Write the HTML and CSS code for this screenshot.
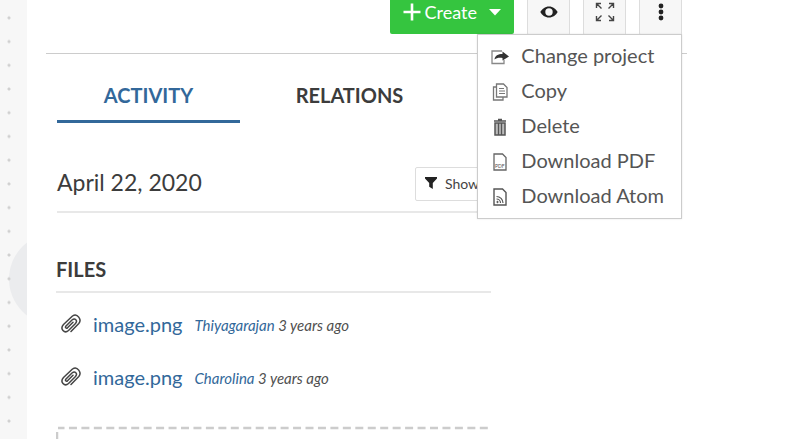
FILE: index.html
```
<!DOCTYPE html>
<html lang="en">
<head>
<meta charset="UTF-8">
<meta name="viewport" content="width=device-width, initial-scale=1.0">
<title>Work package</title>
<link rel="stylesheet" href="styles.css">
</head>
<body>
  <div class="page">
    <!-- Dotted strip on the left -->
    <aside class="rail">
      <div class="rail-circle"></div>
      <div class="rail-dots"></div>
    </aside>

    <main class="content">
      <!-- Toolbar -->
      <div class="toolbar">
        <button class="create-button" type="button">
          <svg width="20" height="20" viewBox="0 0 20 20"><path d="M10 1.500v17M1.500 10h17" stroke="#fff" stroke-width="2.600"/></svg>
          <span>Create</span>
          <svg class="caret" width="14" height="8" viewBox="0 0 14 8"><path d="M1 1h12L7 7.500z" fill="#fff"/></svg>
        </button>
        <button class="tool-button" type="button" aria-label="Watch">
          <svg width="18" height="12" viewBox="0 0 18 12"><path fill-rule="evenodd" d="M9 0.500C5 0.500 2 3 0.300 6 2 9 5 11.500 9 11.500S16 9 17.700 6C16 3 13 0.500 9 0.500zM9 2.300a3.700 3.700 0 1 1 0 7.400 3.700 3.700 0 0 1 0-7.400z" fill="#222"/></svg>
        </button>
        <button class="tool-button" type="button" aria-label="Full screen">
          <svg width="20" height="20" viewBox="0 0 20 20" fill="none" stroke="#444" stroke-width="1.400"><path d="M1.500 6V1.500H6M1.500 1.500l5 5M14 1.500h4.500V6M18.500 1.500l-5 5M1.500 14v4.500H6M1.500 18.500l5-5M18.500 14v4.500H14M18.500 18.500l-5-5"/></svg>
        </button>
        <div class="more">
          <button class="tool-button" type="button" aria-label="More" aria-expanded="true">
            <svg width="6" height="18" viewBox="0 0 6 18" fill="#222"><circle cx="3" cy="3" r="2.400"/><circle cx="3" cy="9" r="2.400"/><circle cx="3" cy="15" r="2.400"/></svg>
          </button>
          <ul class="menu">
            <li><button class="menu-item" type="button">
              <svg width="18" height="18" viewBox="0 0 18 18" fill="none"><path d="M11 3H1v12.500h12V12" stroke="#888" stroke-width="1.300"/><path d="M3.500 11.500C4 7.500 7 6 11.500 6V3.500L18 8.500l-6.500 4V10C8 9.500 5.500 10 3.500 11.500z" fill="#333"/></svg>
              <span>Change project</span>
            </button></li>
            <li><button class="menu-item" type="button">
              <svg width="18" height="18" viewBox="0 0 18 18" fill="none" stroke="#777" stroke-width="1.300"><path d="M5.500 1h7l3.500 3.500V14H5.500zM5.500 4H2.500v13H12v-3"/><path d="M8 5.500h5M8 8h6M8 10.500h6" stroke-width="1"/></svg>
              <span>Copy</span>
            </button></li>
            <li><button class="menu-item" type="button">
              <svg width="18" height="18" viewBox="0 0 18 18" fill="none" stroke="#555"><path d="M3 3h12M7 1.500h4" stroke-width="1.500"/><path d="M4 5h10v12H4z" fill="#bbb" stroke-width="1.500"/><path d="M7.500 5v12M10.500 5v12" stroke-width="1.300"/></svg>
              <span>Delete</span>
            </button></li>
            <li><button class="menu-item" type="button">
              <svg width="18" height="18" viewBox="0 0 18 18"><path d="M3 1h8.500L15 4.500V17H3z" fill="none" stroke="#666" stroke-width="1.300"/><text class="pdf-label" x="4" y="15">PDF</text></svg>
              <span>Download PDF</span>
            </button></li>
            <li><button class="menu-item" type="button">
              <svg width="18" height="18" viewBox="0 0 18 18" fill="none" stroke="#555"><path d="M3 1h8.500L15 4.500V17H3z" stroke-width="1.400"/><path d="M5.500 11a4 4 0 0 1 4 4M5.500 8.500a6.500 6.500 0 0 1 6.500 6.500" stroke-width="1.200"/><circle cx="6.500" cy="14" r="0.700" fill="#444"/></svg>
              <span>Download Atom</span>
            </button></li>
          </ul>
        </div>
      </div>

      <div class="panel">
        <!-- Tabs -->
        <nav class="tabs">
          <a class="tab active" href="#activity">ACTIVITY</a>
          <a class="tab" href="#relations">RELATIONS</a>
        </nav>

        <section class="activity" id="activity">
          <h2 class="date">April 22, 2020</h2>
          <button class="filter-button" type="button">
            <svg width="12" height="12" viewBox="0 0 12 12"><path d="M0 0h12v1.500L7.800 6v6L4.200 9.800V6L0 1.500z" fill="#222"/></svg>
            <span>Show</span>
          </button>
        </section>

        <!-- Attachments -->
        <section class="files">
          <h3 class="files-title">FILES</h3>
          <ul class="file-list">
            <li class="file">
              <svg class="clip" width="22" height="20" viewBox="0 0 22 20"><use href="#clip"/></svg>
              <a class="file-name" href="#file1">image.png</a>
              <span class="file-info"><a href="#user1">Thiyagarajan</a> 3 years ago</span>
            </li>
            <li class="file">
              <svg class="clip" width="22" height="20" viewBox="0 0 22 20">
                <g id="clip" fill="none" stroke="#444" stroke-width="1.500" stroke-linecap="round" stroke-linejoin="round"><path d="M11 18.500L18.800 10.500C22 7 17.500-0.500 12.500 3L3.500 11.500C-0.500 16 4.500 21 8.500 17.500L15.500 10.500C18 7.500 15 4.500 12 7L6 13C4.800 14.500 6.200 15.800 7.500 14.800L13 9.300"/></g>
              </svg>
              <a class="file-name" href="#file2">image.png</a>
              <span class="file-info"><a href="#user2">Charolina</a> 3 years ago</span>
            </li>
          </ul>
          <div class="drop-zone">
            <svg width="100%" height="80"><rect x="1" y="2" width="120%" height="76" rx="1" fill="none" stroke="#ccc" stroke-width="2.500" stroke-dasharray="8 4.450" stroke-dashoffset="1.500"/></svg>
          </div>
        </section>
      </div>
    </main>
  </div>
</body>
</html>
```
FILE: styles.css
```
* {
  box-sizing: border-box;
}
body {
  font-family: Lato, "Liberation Sans", sans-serif;
  color: #3c3c3c;
  background: #fff;
  margin: 0;
}
button {
  font-family: inherit;
  cursor: pointer;
}
ul {
  list-style: none;
  margin: 0;
  padding: 0;
}
a {
  color: #32689a;
  text-decoration: none;
}
.page {
  display: flex;
  height: 100vh;
  overflow: hidden;
}
/* Left strip */
.rail {
  position: relative;
  flex: 0 0 27px;
  padding: 6px 0;
  background: #f7f7f7;
  overflow: hidden;
}
.rail-circle {
  position: absolute;
  top: 233px;
  left: 9px;
  width: 92px;
  height: 92px;
  border-radius: 50%;
  background: #ebecee;
}
.rail-dots {
  position: relative;
  height: 100%;
  background-image: radial-gradient(circle at 9px 50%, #d0d0d0 1px, transparent 2px);
  background-size: 27px 24px;
  background-repeat: no-repeat round;
}
.content {
  flex: 1;
  padding: 0 100px 0 19px;
}
/* Toolbar */
.toolbar {
  display: flex;
  justify-content: flex-end;
  align-items: flex-start;
  gap: 13px;
  height: 54px;
  padding-right: 5px;
  border-bottom: 1px solid #ccc;
}
.create-button {
  display: flex;
  align-items: center;
  gap: 3px;
  height: 34px;
  padding: 0 12px 10px;
  border: none;
  border-radius: 0 0 2px 2px;
  background: #35c53f;
  color: #fff;
  font-size: 18px;
}
.caret {
  margin-left: 8px;
}
.tool-button {
  display: flex;
  justify-content: center;
  align-items: center;
  width: 43px;
  height: 35px;
  padding: 0 0 10px;
  border: 1px solid #ddd;
  border-top: none;
  border-radius: 0 0 2px 2px;
  background: #f7f7f7;
}
.more {
  position: relative;
}
.menu {
  position: absolute;
  top: 34px;
  right: 0;
  z-index: 10;
  padding: 4px 0;
  border: 1px solid #ccc;
  background: #fff;
  box-shadow: 0 0 2px rgba(0, 0, 0, 0.1);
}
.menu-item {
  display: flex;
  align-items: center;
  gap: 12px;
  width: 100%;
  height: 35px;
  padding: 0 17px 0 13px;
  border: none;
  background: none;
  color: #555;
  font-size: 20px;
  white-space: nowrap;
}
.menu-item span {
  padding-bottom: 4px;
}
.pdf-label {
  font-size: 5px;
  fill: #555;
}
/* Tabs */
.panel {
  max-width: 445px;
  padding-left: 10px;
}
.tabs {
  display: flex;
  gap: 18px;
  margin-left: 1px;
}
.tab {
  width: 183px;
  padding: 29px 0 13px;
  border-bottom: 3px solid transparent;
  color: #3c3c3c;
  font-size: 20px;
  font-weight: bold;
  line-height: 24px;
  text-align: center;
}
.tab.active {
  border-color: #32689a;
  color: #32689a;
}
.activity {
  display: flex;
  justify-content: space-between;
  align-items: center;
  margin: 44px 0 0 1px;
  padding-bottom: 10px;
  border-bottom: 2px solid #e8e8e8;
}
.date {
  margin: 0;
  padding-bottom: 4px;
  font-size: 23px;
  font-weight: normal;
  line-height: 28px;
}
.filter-button {
  display: flex;
  align-items: center;
  gap: 8px;
  width: 76px;
  height: 34px;
  padding: 0 9px 2px;
  border: 1px solid #ddd;
  border-radius: 2px;
  background: #fff;
  color: #444;
  font-size: 14px;
}
/* Files */
.files {
  margin-top: 44px;
}
.files-title {
  margin: 0;
  padding-bottom: 10px;
  border-bottom: 2px solid #e8e8e8;
  font-size: 20px;
  line-height: 24px;
}
.file-list {
  margin: 5px 0 22px;
}
.file {
  display: flex;
  align-items: center;
  height: 53px;
  padding-left: 4px;
}
.clip {
  margin-bottom: 4px;
}
.file-name {
  margin: 0 12px 0 11px;
  padding-bottom: 2px;
  font-size: 20px;
}
.file-info {
  color: #505050;
  font-size: 15px;
  font-style: italic;
}
.drop-zone {
  overflow: hidden;
}
```
